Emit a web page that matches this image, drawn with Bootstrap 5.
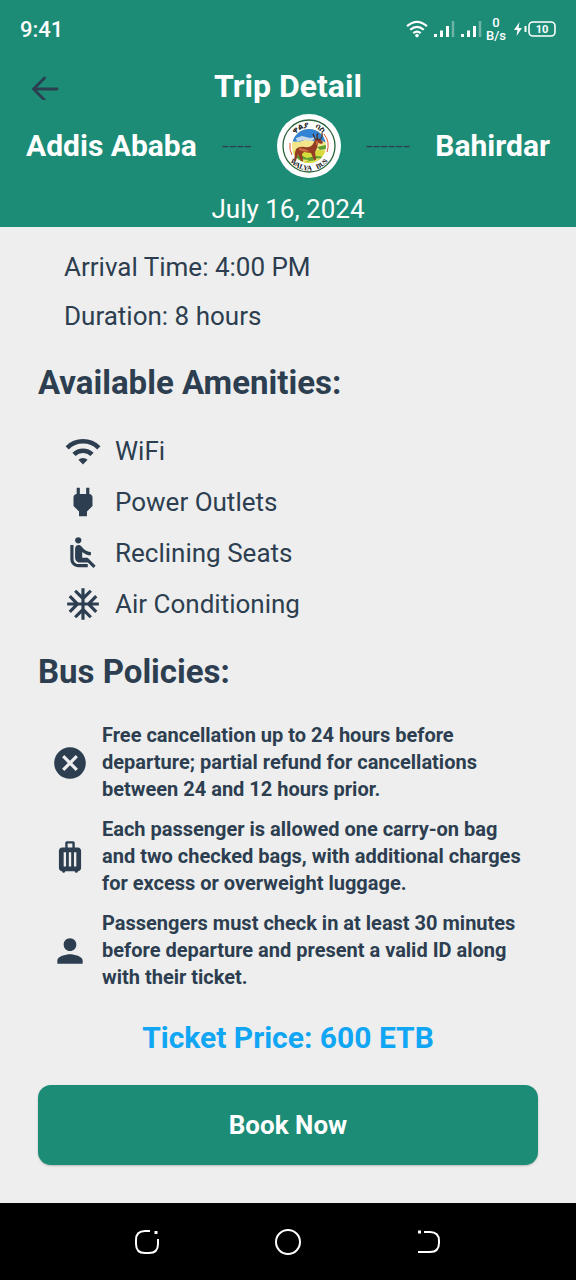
<!DOCTYPE html>
<html lang="en">
<head>
<meta charset="utf-8">
<meta name="viewport" content="width=device-width, initial-scale=1">
<title>Trip Detail</title>
<link href="https://cdn.jsdelivr.net/npm/bootstrap@5.3.0/dist/css/bootstrap.min.css" rel="stylesheet">
<style>
  :root { --brand: #1c8c77; --ink: #2c3e50; }
  body { font-family: Roboto, "Liberation Sans", sans-serif; background: #eee; color: var(--ink); }
  svg { display: block; flex: none; }
  .trip-header { background: var(--brand); color: #fff; }
  .status-bar { height: 58px; padding: 0 20px; }
  .clock { font-size: 22px; font-weight: 500; }
  .net-rate { font-size: 13px; line-height: 13px; font-weight: 500; text-align: center; }
  .title-bar { display: grid; grid-template-columns: 64px 1fr 64px; align-items: center; height: 56px; padding: 0 13px; }
  .back-btn { color: var(--ink); justify-self: center; }
  .title-bar h1 { font-size: 32px; line-height: 40px; font-weight: 700; }
  .route { padding: 0 26px; }
  .city { font-size: 30px; line-height: 36px; font-weight: 700; }
  .dashes { color: var(--ink); font-size: 26px; line-height: 36px; font-weight: 300; }
  .copy { font-size: 26px; line-height: 36px; }
  .trip-date { padding-top: 13px; }
  .trip-body { padding: 22px 38px 38px; }
  .indent { padding-left: 26px; }
  .stack { display: grid; gap: 13px; }
  .heading { font-size: 33px; line-height: 40px; font-weight: 700; margin: 29px 0; }
  .item-row { display: flex; align-items: center; gap: 13px; }
  .policies { padding: 1px 13px 0; }
  .policies p { font-size: 20px; line-height: 27px; font-weight: 700; margin: 0; }
  .fare { color: #10a6f4; font-size: 30px; line-height: 36px; font-weight: 700; margin: 29px 0; }
  .book-btn { --bs-btn-bg: var(--brand); --bs-btn-color: #fff; --bs-btn-hover-bg: #177664; --bs-btn-hover-color: #fff;
    height: 80px; border: 0; border-radius: 13px; font-size: 26px; font-weight: 700; box-shadow: 0 1px 2px rgba(0,0,0,.22); }
  .system-nav { background: #000; height: 77px; padding: 0 77px; }
</style>
</head>
<body class="d-flex flex-column min-vh-100">
<header class="trip-header">
  <div class="status-bar d-flex align-items-center justify-content-between">
    <span class="clock">9:41</span>
    <div class="d-flex align-items-center gap-1">
      <svg width="22" height="18" viewBox="0 0 22 18" fill="none" stroke="#fff" stroke-width="2.2" aria-hidden="true"><path d="M1 6.2Q11-2.6 21 6.2M4.2 9.8Q11 3.8 17.8 9.8M7.3 13.1Q11 10 14.7 13.1"/><circle cx="11" cy="15.6" r="1.8" fill="#fff" stroke="none"/></svg>
      <svg width="23" height="18" viewBox="0 0 23 18" fill="none" stroke="#fff" stroke-width="3" aria-hidden="true"><path d="M3.5 14v3M9.5 10.500v6.500M15.500 6v11"/><path d="M21 1v16" stroke-opacity=".35" stroke-width="2.500"/></svg>
      <svg width="23" height="18" viewBox="0 0 23 18" fill="none" stroke="#fff" stroke-width="3" aria-hidden="true"><path d="M3.5 14v3M9.5 10.500v6.500M15.500 6v11"/><path d="M21 1v16" stroke-opacity=".35" stroke-width="2.500"/></svg>
      <span class="net-rate">0<br>B/s</span>
      <svg width="46" height="18" viewBox="0 0 46 18" aria-label="Battery 10 percent"><path d="M9.500 2L4 10h3.500L6.500 16 12 8H8.500z" fill="#fff"/><path d="M15.500 6v6" stroke="#fff" stroke-width="2"/><rect x="19" y="2" width="26" height="14" rx="4" fill="none" stroke="#fff" stroke-width="1.600"/><text x="32" y="13" fill="#fff" font-size="11" font-weight="700" text-anchor="middle">10</text></svg>
    </div>
  </div>
  <div class="title-bar">
    <button type="button" class="btn p-0 border-0 back-btn" aria-label="Back">
      <svg width="28" height="28" viewBox="0 0 28 28" fill="none" stroke="#2c3e50" stroke-width="2.800" stroke-linecap="round" stroke-linejoin="round"><path d="M26 17.500H2.500M13.500 6.500L2.500 17.500l11 11" transform="translate(0 -.5)"/></svg>
    </button>
    <h1 class="text-center m-0">Trip Detail</h1>
  </div>
  <div class="route d-flex align-items-center justify-content-between">
    <span class="city">Addis Ababa</span>
    <span class="dashes" aria-hidden="true">----</span>
    <svg width="64" height="64" viewBox="0 0 64 64" role="img" aria-label="Walya Bus">
      <defs>
        <clipPath id="scene"><circle cx="32" cy="32" r="17"/></clipPath>
        <path id="arcTop" d="M13.500 32a18.500 18.500 0 0 1 37 0"/>
        <path id="arcBottom" d="M7.500 32a24.500 24.500 0 0 0 49 0"/>
      </defs>
      <circle cx="32" cy="32" r="32" fill="#fff"/>
      <circle cx="32" cy="32" r="26" fill="#fff" stroke="#296239" stroke-width="1.300"/>
      <g clip-path="url(#scene)">
        <path fill="#f3e68a" d="M14 14h36v36H14z"/>
        <path fill="#3384d4" d="M14 14h36v15l-7-3-7 1-6-2-8 3-8-1z"/>
        <path fill="#c5d8e9" d="M19 24l6-2 8 2 6-1-4 4-8-1-7 2z"/>
        <path fill="#d7db3d" d="M14 38l11-4 25 3v13H14z"/>
        <path fill="#5f9e33" d="M15 42l8-1 7 3 9-2 9 1-6 3-10 1-6 2zM40 33l9-2v4l-6 1z"/>
        <path fill="#eddf68" d="M23 45l9 1-5 3zM36 45l9-1-5 4z"/>
      </g>
      <path fill="#943d24" d="M19 35q3-3 9-2 5 1 8-3l2-4 2-2 3 1 3 3-1 2-4-1-1 5-2 4 1 8h-2l-3-7-7-1-2 2 1 7h-2l-3-7-2 7h-2l1-8z"/>
      <path fill="#c96a3f" d="M22 34l6 1 5 2-5 1-6-2zM39 27l3 1-3 3z"/>
      <path fill="none" stroke="#4b3029" stroke-width="1.300" d="M39 26q-2-3-3-6M41 26q-2-4 0-7M42 26q4-2 3-7"/>
      <path fill="none" stroke="#d9552e" d="M13 29a19 19 0 0 0 2 12M47 20a19 19 0 0 1 3 18"/>
      <text font-size="8" font-weight="700" fill="#111" text-anchor="middle"><textPath href="#arcTop" startOffset="50%">ዋልያ&#160;&#160; ባስ</textPath></text>
      <text font-family="Liberation Serif, serif" font-size="7" font-weight="700" fill="#111" text-anchor="middle"><textPath href="#arcBottom" startOffset="50%">WALYA&#160;&#160; BUS</textPath></text>
    </svg>
    <span class="dashes" aria-hidden="true">------</span>
    <span class="city">Bahirdar</span>
  </div>
  <p class="trip-date copy text-center m-0">July 16, 2024</p>
</header>

<main class="trip-body">
  <div class="stack indent copy">
    <div>Arrival Time: 4:00 PM</div>
    <div>Duration: 8 hours</div>
  </div>

  <h2 class="heading">Available Amenities:</h2>
  <ul class="list-unstyled stack indent copy m-0">
    <li class="item-row"><svg width="38" height="38" viewBox="0 0 24 24" fill="none" stroke="#2c3e50" stroke-width="2.900" aria-hidden="true"><path d="M2 10a14.200 14.200 0 0 1 20 0M6.300 14.200a8.100 8.100 0 0 1 11.400 0"/><path d="M12 20.500l-2.900-2.900a4.100 4.100 0 0 1 5.800 0z" fill="#2c3e50" stroke="none"/></svg>WiFi</li>
    <li class="item-row"><svg width="38" height="38" viewBox="0 0 24 24" fill="#2c3e50" aria-hidden="true"><path d="M16.010 7L16 3h-2v4h-4V3H8v4h-.010C7 6.990 6 7.990 6 8.990v5.490L9.500 18v3h5v-3l3.500-3.510v-5.500c0-1-1-2-1.990-2z"/></svg>Power Outlets</li>
    <li class="item-row"><svg width="38" height="38" viewBox="0 0 24 24" fill="#2c3e50" aria-hidden="true"><path d="M7.590 5.410c-.78-.78-.78-2.050 0-2.830.78-.78 2.050-.78 2.830 0 .78.78.78 2.050 0 2.830-.79.79-2.050.79-2.830 0zM6 16V7H4v9c0 2.760 2.240 5 5 5h6v-2H9c-1.660 0-3-1.340-3-3zm14 4.070L14.930 15H11.500v-3.680c1.400 1.150 3.600 2.160 5.500 2.160v-2.160c-1.660.02-3.610-.87-4.670-2.040l-1.400-1.550c-.19-.21-.43-.38-.69-.5-.29-.14-.62-.23-.96-.23h-.03C8.010 7 7 8.010 7 9.250V15c0 1.660 1.340 3 3 3h5.070l3.500 3.500L20 20.070z"/></svg>Reclining Seats</li>
    <li class="item-row"><svg width="38" height="38" viewBox="0 0 24 24" fill="#2c3e50" aria-hidden="true"><path d="M22 11h-4.170l3.240-3.240-1.410-1.420L15 11h-2V9l4.660-4.660-1.420-1.410L13 6.170V2h-2v4.170L7.760 2.930 6.340 4.340 11 9v2H9L4.340 6.340 2.930 7.760 6.170 11H2v2h4.170l-3.240 3.240 1.410 1.420L9 13h2v2l-4.660 4.660 1.420 1.410L11 17.830V22h2v-4.170l3.240 3.240 1.420-1.410L13 15v-2h2l4.660 4.660 1.410-1.420L17.830 13H22z"/></svg>Air Conditioning</li>
  </ul>

  <h2 class="heading">Bus Policies:</h2>
  <ul class="list-unstyled stack policies m-0">
    <li class="item-row"><svg width="38" height="38" viewBox="0 0 24 24" fill="#2c3e50" aria-hidden="true"><path d="M12 2C6.470 2 2 6.470 2 12s4.470 10 10 10 10-4.470 10-10S17.530 2 12 2zm5 13.590L15.590 17 12 13.410 8.410 17 7 15.590 10.590 12 7 8.410 8.410 7 12 10.590 15.590 7 17 8.410 13.410 12 17 15.590z"/></svg><p>Free cancellation up to 24 hours before departure; partial refund for cancellations between 24 and 12 hours prior.</p></li>
    <li class="item-row"><svg width="38" height="38" viewBox="0 0 24 24" fill="#2c3e50" aria-hidden="true"><path d="M17 6h-2V3c0-.55-.45-1-1-1h-4c-.55 0-1 .45-1 1v3H7c-1.100 0-2 .9-2 2v11c0 1.100.9 2 2 2 0 .55.45 1 1 1s1-.45 1-1h6c0 .55.45 1 1 1s1-.45 1-1c1.100 0 2-.9 2-2V8c0-1.100-.9-2-2-2zM9.500 18H8V9h1.500v9zm3.250 0h-1.500V9h1.500v9zm.75-12h-3V3.500h3V6zM16 18h-1.500V9H16v9z"/></svg><p>Each passenger is allowed one carry-on bag and two checked bags, with additional charges for excess or overweight luggage.</p></li>
    <li class="item-row"><svg width="38" height="38" viewBox="0 0 24 24" fill="#2c3e50" aria-hidden="true"><path d="M12 12c2.210 0 4-1.790 4-4s-1.790-4-4-4-4 1.790-4 4 1.790 4 4 4zm0 2c-2.670 0-8 1.340-8 4v2h16v-2c0-2.660-5.330-4-8-4z"/></svg><p>Passengers must check in at least 30 minutes before departure and present a valid ID along with their ticket.</p></li>
  </ul>

  <p class="fare text-center">Ticket Price: 600 ETB</p>
  <button type="button" class="btn book-btn w-100">Book Now</button>
</main>

<nav class="system-nav d-flex align-items-center mt-auto" aria-label="System navigation">
  <button type="button" class="btn p-0 border-0 flex-fill d-flex justify-content-center" aria-label="Recent apps"><svg width="28" height="28" viewBox="0 0 28 28" fill="none" stroke="#fff" stroke-width="2"><path d="M17 3H12Q3 3 3 12v4q0 9 9 9h4q9 0 9-9v-5"/><path d="M21.500 4.500h3" stroke-width="3"/></svg></button>
  <button type="button" class="btn p-0 border-0 flex-fill d-flex justify-content-center" aria-label="Home"><svg width="28" height="28" viewBox="0 0 28 28" fill="none" stroke="#fff" stroke-width="2"><circle cx="14" cy="14" r="12"/></svg></button>
  <button type="button" class="btn p-0 border-0 flex-fill d-flex justify-content-center" aria-label="Back"><svg width="28" height="28" viewBox="0 0 28 28" fill="none" stroke="#fff" stroke-width="2"><path d="M9 4h6q9 0 9 9v2q0 9-9 9H3"/><path d="M3 4h3" stroke-width="3"/></svg></button>
</nav>
<script src="https://cdn.jsdelivr.net/npm/bootstrap@5.3.0/dist/js/bootstrap.bundle.min.js"></script>
</body>
</html>
